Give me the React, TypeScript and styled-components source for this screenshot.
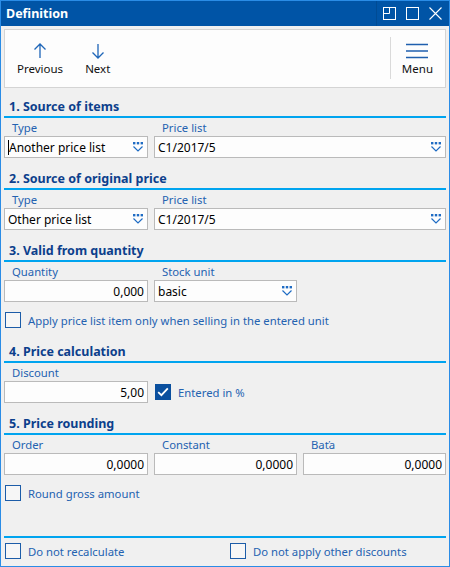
import React from "react";
import styled, { createGlobalStyle } from "styled-components";

const GlobalStyle = createGlobalStyle`
  html, body {
    margin: 0;
    padding: 0;
    background: #f0f0f0;
  }
  * {
    box-sizing: border-box;
  }
`;

const Window = styled.div`
  width: 450px;
  height: 567px;
  display: flex;
  flex-direction: column;
  border: 1px solid #2a8ce6;
  background: #f0f0f0;
  font-family: "Noto Sans", "Open Sans", sans-serif;
  font-size: 11.3px;
  color: #000;
`;

const TitleBar = styled.div`
  height: 25px;
  flex: none;
  display: flex;
  align-items: center;
  background: #0054a6;
  color: #fff;
`;

const TitleText = styled.div`
  flex: 1;
  padding-left: 5px;
  font-weight: 700;
  font-size: 12.5px;
`;

const TitleButtons = styled.div`
  display: flex;
  align-items: center;
  height: 100%;
  gap: 10px;
  padding: 0 7px 0 6px;
  border-left: 1px solid #004b94;
`;

const Body = styled.div`
  flex: 1;
  display: flex;
  flex-direction: column;
  padding: 3px 3px 4px;
`;

const Toolbar = styled.div`
  height: 59px;
  display: flex;
  align-items: stretch;
  background: #fdfdfd;
  border: 1px solid #d4d4d4;
  padding: 0 6px;
`;

const ToolButton = styled.div<{ $gapLeft?: number }>`
  display: flex;
  flex-direction: column;
  align-items: center;
  margin-left: ${(p) => p.$gapLeft ?? 0}px;
  padding: 13px 6px 0;
  gap: 2px;
  color: #111;
  font-size: 11.5px;
`;

const ToolSpacer = styled.div`
  flex: 1;
`;

const ToolSeparator = styled.div`
  width: 1px;
  margin: 7px 5px 8px 0;
  background: #dadada;
`;

const SectionTitle = styled.div<{ $top?: number }>`
  height: 20px;
  margin-top: ${(p) => p.$top ?? 10}px;
  padding-left: 5px;
  display: flex;
  align-items: center;
  border-bottom: 2px solid #00a4ef;
  font-weight: 700;
  font-size: 12.5px;
  color: #0c3f8c;
  box-sizing: content-box;
`;

const FieldGrid = styled.div<{ $cols: string }>`
  display: grid;
  grid-template-columns: ${(p) => p.$cols};
`;

const Field = styled.div`
  display: flex;
  flex-direction: column;
`;

const Label = styled.div`
  height: 18px;
  padding-left: 8px;
  display: flex;
  align-items: center;
  color: #2462b0;
  font-size: 11.3px;
`;

const InputBox = styled.div<{ $align?: "left" | "right" }>`
  height: 22px;
  display: flex;
  align-items: center;
  justify-content: ${(p) => (p.$align === "right" ? "flex-end" : "flex-start")};
  padding: 0 3px;
  background: #fdfdfd;
  border: 1px solid #bababa;
  font-size: 12px;
  color: #000;
  white-space: nowrap;
`;

const SelectText = styled.span`
  flex: 1;
`;

const Caret = styled.span`
  width: 1px;
  height: 15px;
  background: #000;
`;

const CheckRow = styled.div<{ $top?: number }>`
  height: 22px;
  margin-top: ${(p) => p.$top ?? 7}px;
  display: flex;
  align-items: center;
  gap: 7px;
  padding-left: 1px;
  color: #2462b0;
  font-size: 11.3px;
`;

const InlineCheck = styled(CheckRow)`
  margin-top: 0;
  padding-left: 7px;
  align-self: end;
`;

const Box = styled.div<{ $checked?: boolean }>`
  width: 16px;
  height: 16px;
  flex: none;
  display: flex;
  align-items: center;
  justify-content: center;
  border: 1px solid ${(p) => (p.$checked ? "#0a4f9e" : "#1c5ca8")};
  background: ${(p) => (p.$checked ? "#0a4f9e" : "#f6f6f6")};
`;

const Footer = styled.div`
  margin-top: auto;
  border-top: 2px solid #00a4ef;
  padding-top: 2px;
  display: grid;
  grid-template-columns: 225px 1fr;
`;

const FooterCheck = styled(CheckRow)`
  margin-top: 0;
`;

function DropIcon() {
  return (
    <svg width="12" height="10" viewBox="0 0 12 10">
      <rect x="1" y="0" width="2.4" height="2.4" fill="#1f6cc4" />
      <rect x="4.8" y="0" width="2.4" height="2.4" fill="#1f6cc4" />
      <rect x="8.6" y="0" width="2.4" height="2.4" fill="#1f6cc4" />
      <path d="M1.5 4.5 L6 9 L10.5 4.5" fill="none" stroke="#1f6cc4" strokeWidth="1.2" />
    </svg>
  );
}

function Select({ value, caret }: { value: string; caret?: boolean }) {
  return (
    <InputBox>
      {caret && <Caret />}
      <SelectText>{value}</SelectText>
      <DropIcon />
    </InputBox>
  );
}

function Check({ checked }: { checked?: boolean }) {
  return (
    <Box $checked={checked}>
      {checked && (
        <svg width="12" height="10" viewBox="0 0 12 10">
          <path d="M1.2 5.2 L4.4 8.2 L10.8 1.4" fill="none" stroke="#fff" strokeWidth="1.8" />
        </svg>
      )}
    </Box>
  );
}

export default function App() {
  return (
    <>
      <GlobalStyle />
      <Window>
        <TitleBar>
          <TitleText>Definition</TitleText>
          <TitleButtons>
            <svg width="13" height="13" viewBox="0 0 13 13">
              <rect x="0.5" y="0.5" width="12" height="12" fill="none" stroke="#fff" />
              <path d="M6.5 0.5 V6.5 H0.5" fill="none" stroke="#fff" />
            </svg>
            <svg width="13" height="13" viewBox="0 0 13 13">
              <rect x="0.5" y="0.5" width="12" height="12" fill="none" stroke="#fff" />
            </svg>
            <svg width="13" height="13" viewBox="0 0 13 13">
              <path d="M0.5 0.5 L12.5 12.5 M12.5 0.5 L0.5 12.5" stroke="#fff" strokeWidth="1.1" />
            </svg>
          </TitleButtons>
        </TitleBar>
        <Body>
          <Toolbar>
            <ToolButton>
              <svg width="14" height="16" viewBox="0 0 14 16">
                <path d="M7 1 V15 M1.5 6.5 L7 1 L12.5 6.5" fill="none" stroke="#1f66b8" strokeWidth="1.3" />
              </svg>
              Previous
            </ToolButton>
            <ToolButton $gapLeft={10}>
              <svg width="14" height="16" viewBox="0 0 14 16">
                <path d="M7 1 V15 M1.5 9.5 L7 15 L12.5 9.5" fill="none" stroke="#1f66b8" strokeWidth="1.3" />
              </svg>
              Next
            </ToolButton>
            <ToolSpacer />
            <ToolSeparator />
            <ToolButton>
              <svg width="22" height="16" viewBox="0 0 22 16">
                <path d="M0 1.5 H22 M0 8 H22 M0 14.5 H22" stroke="#1f5fae" strokeWidth="1.4" />
              </svg>
              Menu
            </ToolButton>
          </Toolbar>

          <SectionTitle $top={8}>1. Source of items</SectionTitle>
          <FieldGrid $cols="144px 6px 1fr">
            <Field>
              <Label>Type</Label>
              <Select value="Another price list" caret />
            </Field>
            <div />
            <Field>
              <Label>Price list</Label>
              <Select value="C1/2017/5" />
            </Field>
          </FieldGrid>

          <SectionTitle>2. Source of original price</SectionTitle>
          <FieldGrid $cols="144px 6px 1fr">
            <Field>
              <Label>Type</Label>
              <Select value="Other price list" />
            </Field>
            <div />
            <Field>
              <Label>Price list</Label>
              <Select value="C1/2017/5" />
            </Field>
          </FieldGrid>

          <SectionTitle>3. Valid from quantity</SectionTitle>
          <FieldGrid $cols="144px 6px 143px">
            <Field>
              <Label>Quantity</Label>
              <InputBox $align="right">0,000</InputBox>
            </Field>
            <div />
            <Field>
              <Label>Stock unit</Label>
              <Select value="basic" />
            </Field>
          </FieldGrid>
          <CheckRow>
            <Check />
            Apply price list item only when selling in the entered unit
          </CheckRow>

          <SectionTitle>4. Price calculation</SectionTitle>
          <FieldGrid $cols="144px 1fr">
            <Field>
              <Label>Discount</Label>
              <InputBox $align="right">5,00</InputBox>
            </Field>
            <InlineCheck>
              <Check checked />
              Entered in %
            </InlineCheck>
          </FieldGrid>

          <SectionTitle>5. Price rounding</SectionTitle>
          <FieldGrid $cols="144px 6px 143px 6px 1fr">
            <Field>
              <Label>Order</Label>
              <InputBox $align="right">0,0000</InputBox>
            </Field>
            <div />
            <Field>
              <Label>Constant</Label>
              <InputBox $align="right">0,0000</InputBox>
            </Field>
            <div />
            <Field>
              <Label>Baťa</Label>
              <InputBox $align="right">0,0000</InputBox>
            </Field>
          </FieldGrid>
          <CheckRow>
            <Check />
            Round gross amount
          </CheckRow>

          <Footer>
            <FooterCheck>
              <Check />
              Do not recalculate
            </FooterCheck>
            <FooterCheck>
              <Check />
              Do not apply other discounts
            </FooterCheck>
          </Footer>
        </Body>
      </Window>
    </>
  );
}
